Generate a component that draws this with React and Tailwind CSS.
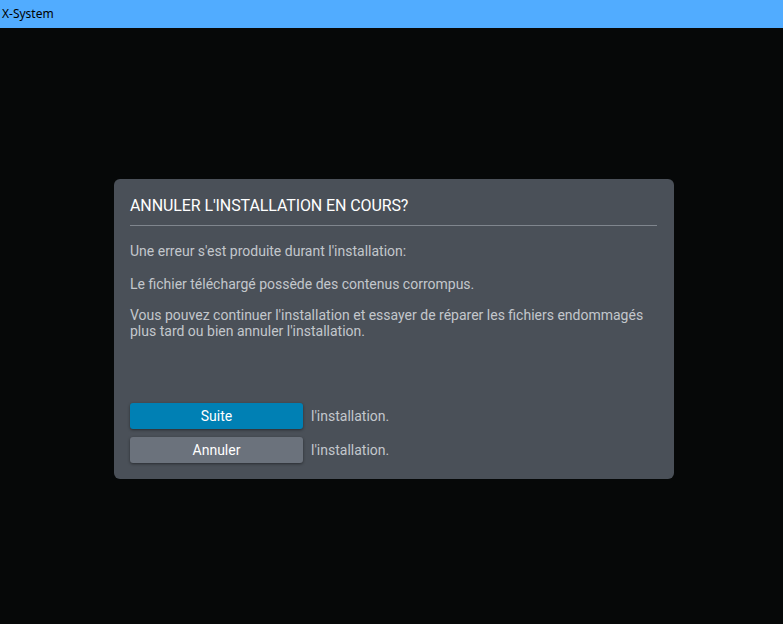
import React from "react";

const lines = [
  "Une erreur s'est produite durant l'installation:",
  "Le fichier téléchargé possède des contenus corrompus.",
];

function ActionRow({ label, tone }) {
  const btn =
    tone === "primary"
      ? "bg-[#0080b4]"
      : "bg-[#6b727c]";
  return (
    <div className="flex items-center gap-2">
      <button
        className={`${btn} w-[173px] h-[26px] rounded-[3px] text-white text-[14px] shadow-[0_1px_3px_rgba(0,0,0,0.45)]`}
      >
        {label}
      </button>
      <span className="text-[14px] text-[#c3c7cc]">l'installation.</span>
    </div>
  );
}

export default function App() {
  return (
    <div className="w-[783px] h-[624px] flex flex-col bg-[#060808] font-['Roboto',sans-serif]">
      <div className="h-[28px] bg-[#51acff] flex items-center px-[2px] pb-[1px]">
        <span className="text-[12px] text-black font-['Noto_Sans','DejaVu_Sans',sans-serif]">
          X-System
        </span>
      </div>

      <div className="flex-1 pt-[151px] pl-[114px]">
        <div className="w-[560px] bg-[#4a5058] rounded-[6px] pl-4 pr-[17px] pt-[15px] pb-[16px]">
          <h1 className="text-white text-[16px] leading-[24px] uppercase tracking-[-0.1px]">
            Annuler l'installation en cours?
          </h1>
          <div className="mt-[7px] h-px bg-[#80868e]" />

          <div className="mt-[17px] text-[14px] leading-[16px] text-[#c3c7cc]">
            <p>{lines[0]}</p>
            <p className="mt-[17px]">{lines[1]}</p>
            <p className="mt-[15px]">
              Vous pouvez continuer l'installation et essayer de réparer les
              fichiers endommagés plus tard ou bien annuler l'installation.
            </p>
          </div>

          <div className="mt-[64px] flex flex-col gap-2">
            <ActionRow label="Suite" tone="primary" />
            <ActionRow label="Annuler" tone="secondary" />
          </div>
        </div>
      </div>
    </div>
  );
}
